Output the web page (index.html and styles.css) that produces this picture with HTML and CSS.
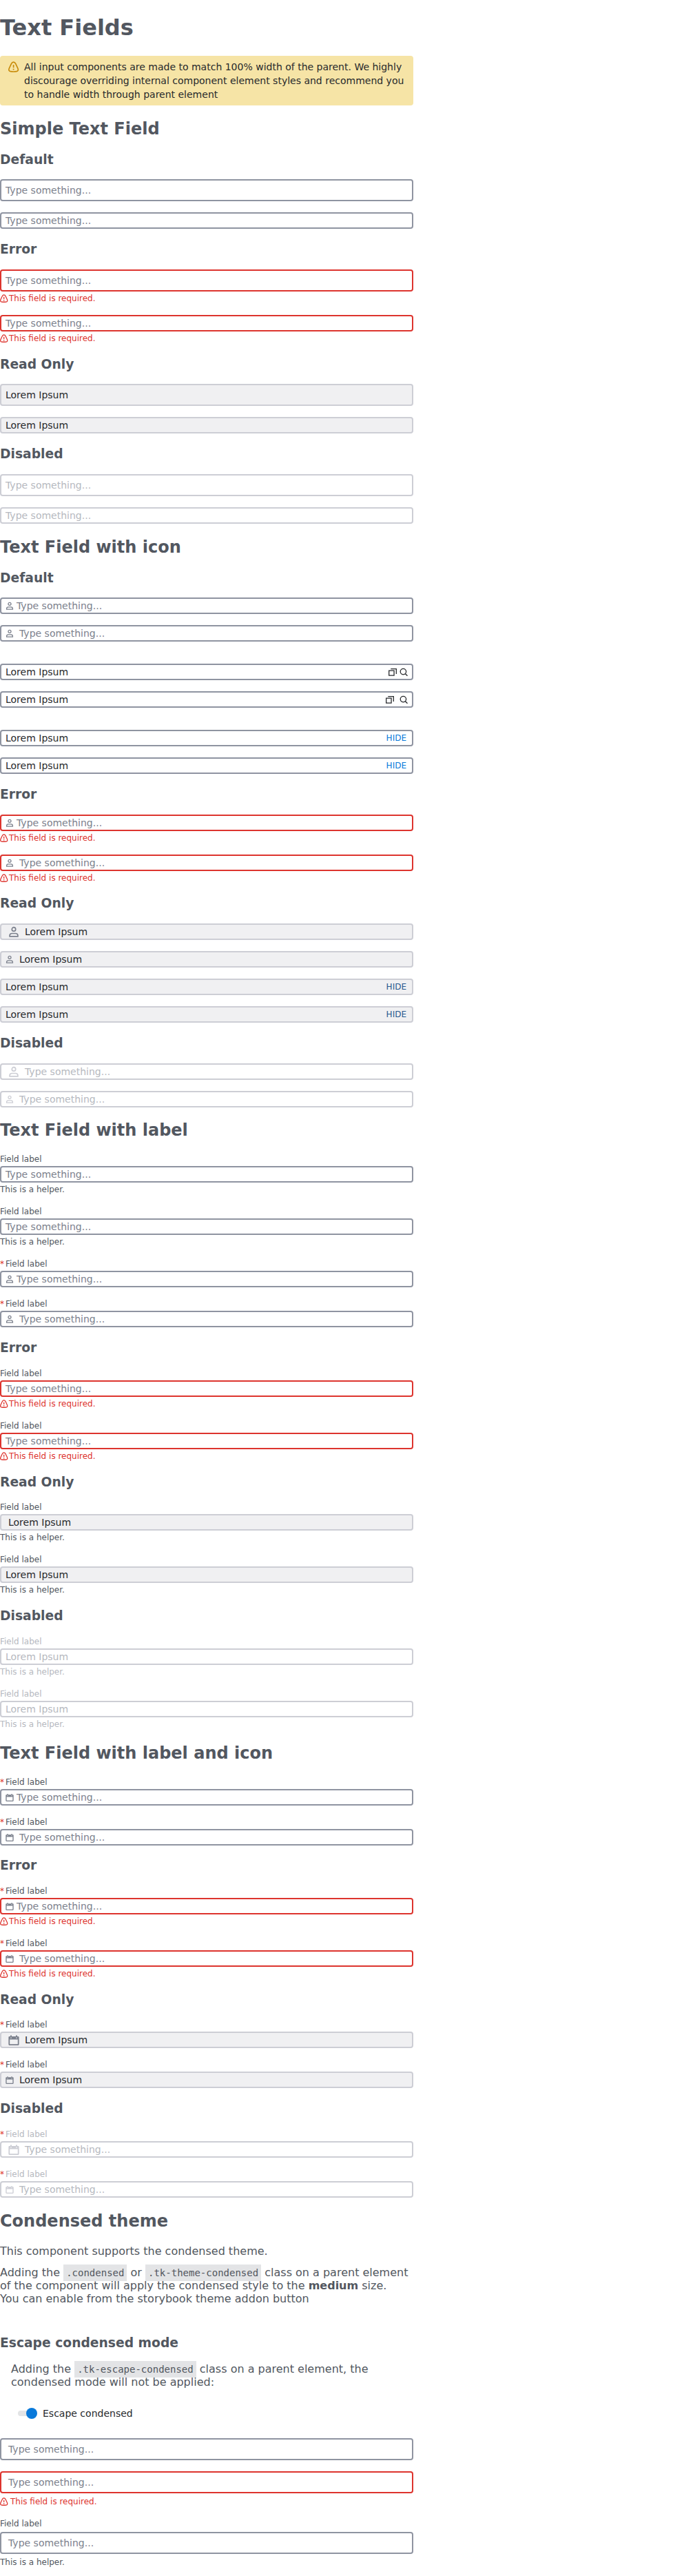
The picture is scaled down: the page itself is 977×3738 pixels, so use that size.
FILE: index.html
```html
<!DOCTYPE html>
<html lang="en">
<head>
<meta charset="utf-8">
<title>Text Fields</title>
<link rel="stylesheet" href="styles.css">
</head>
<body>
<svg class="sprite" aria-hidden="true">
  <symbol id="i-alert" viewBox="0 0 16 16"><path d="M7.600 1.200C6.200 1.200 5.200 2 4.400 3.700L1.400 10C.3 12.700 1 14.400 3.200 14.700C6 15.100 9.200 15.100 12 14.700C14.200 14.400 14.900 12.700 13.800 10L10.800 3.700C10 2 9 1.200 7.600 1.200Z" fill="none" stroke="currentColor" stroke-width="1.700"/><path d="M7.600 5v4.200M7.600 10.700v1.900" stroke="currentColor" stroke-width="1.700" fill="none"/></symbol>
  <symbol id="i-user" viewBox="0 0 16 16"><circle cx="8" cy="4.400" r="2.700" fill="none" stroke="currentColor" stroke-width="1.700"/><path d="M2.100 14.800v-1.200c0-2 1.500-3.100 3.400-3.100h5c1.900 0 3.400 1.100 3.400 3.100v1.200z" fill="none" stroke="currentColor" stroke-width="1.700"/></symbol>
  <symbol id="i-cal" viewBox="0 0 16 16"><path d="M.4 4.400C.4 3.500 1 3 1.900 3H3V1.500h2V3h6V1.500h2V3h1.100c.9 0 1.500.5 1.500 1.400v10c0 .9-.6 1.500-1.500 1.500H1.900c-.9 0-1.500-.6-1.500-1.500zM2.200 7.400v6.800h11.600V7.400zM3.300 4.400v1.400h1.400V4.400zM11.300 4.400v1.400h1.400V4.400z" fill="currentColor" fill-rule="evenodd"/></symbol>
  <symbol id="i-copy" viewBox="0 0 14 14"><path d="M.8 4.700h8.600v8.400H.8zM3.800 1.900h9.400V10.500" fill="none" stroke="currentColor" stroke-width="1.500"/></symbol>
  <symbol id="i-search" viewBox="0 0 14 14"><circle cx="6.300" cy="6.500" r="4.900" fill="none" stroke="currentColor" stroke-width="1.500"/><path d="M9.600 10l3.800 3.700" fill="none" stroke="currentColor" stroke-width="1.600"/></symbol>
</svg>
<main class="page" id="page"></main>
<script src="app.js"></script>
</body>
</html>
```

FILE: styles.css
```css
body { margin: 0; background: #fff; color: #525760; font-family: "DejaVu Sans", sans-serif; font-size: 16px; }
.sprite { display: none; }
.page { width: 600px; display: flow-root; }
.banner { display: flex; gap: 7px; box-sizing: border-box; height: 72px; padding: 6px 12px; border-radius: 4px; background: #f6e4a6; color: #27292c; font-size: 14px; line-height: 20px; }
.banner .icon { flex: none; width: 16px; height: 16px; margin-top: 2px; color: #c88b0a; }
.stack { display: flex; flex-direction: column; gap: 16px; }
.stack + .stack { margin-top: 32px; }
.label { display: flex; gap: 2px; height: 18px; font-size: 12px; line-height: 16px; }
.required { color: #dd342e; }
.box { display: flex; align-items: center; box-sizing: border-box; height: 24px; padding: 0 6px; border: 2px solid #8f94a1; border-radius: 4px; font-size: 14px; line-height: 20px; color: #7c818d; background: #fff; }
.tall .box { height: 32px; }
.value .box { color: #27292c; }
.box .icon { flex: none; width: 12px; height: 12px; margin-right: 4px; color: #7c818d; }
.spaced .box .icon { margin-right: 8px; }
.large .box .icon { width: 16px; height: 16px; margin: 0 8px 0 4px; }
.indent .box { padding-left: 10px; }
.box .tail { display: flex; gap: 4px; margin-left: auto; }
.box .tail .icon { margin: 0; color: #27292c; }
.spaced .box .tail { gap: 8px; }
.action { margin-right: 2px; font-size: 12px; color: #0979da; }
.helper { height: 18px; box-sizing: border-box; padding-top: 3px; font-size: 12px; line-height: 14px; }
.message { display: flex; gap: 1px; color: #dd342e; }
.message .icon { flex: none; width: 12px; height: 12px; margin-top: 1px; }
.error .box { border-color: #dd342e; }
.readonly .box { border-color: #cdced5; background: #f0f0f2; }
.readonly .action { color: #27588e; }
.disabled, .disabled .box { color: #b6b9c0; }
.disabled .box { border-color: #cdced5; }
.disabled .box .icon { color: #cdced5; }
.roomy .box { height: 32px; padding-left: 10px; }
.roomy .helper { height: 20px; padding-top: 5px; }
.roomy .label { height: 20px; }
.roomy .message { gap: 3px; }
.text { margin: 0 0 12px; }
.text.inset { margin-left: 16px; margin-bottom: 0; }
.text code { padding: 4px; background: #e3e4e6; font-family: "DejaVu Sans Mono", monospace; font-size: 14px; }
.escape { margin-top: 44px; }
.toggle { display: flex; align-items: center; gap: 8px; margin: 28px 0 28px 26px; font-size: 14px; color: #27292c; line-height: 16px; }
.track { display: flex; justify-content: flex-end; align-items: center; width: 28px; height: 8px; border-radius: 4px; background: #e3e4e6; }
.thumb { width: 16px; height: 16px; border-radius: 50%; background: #0979da; }
```

FILE: app.js
```js
const icon = (n) => `<svg class="icon"><use href="#i-${n}"/></svg>`;

function field(cls, o = {}) {
  const text = o.text || (/value/.test(cls) ? 'Lorem Ipsum' : 'Type something...');
  let html = `<div class="field ${cls}">`;
  if (o.label) html += `<div class="label">${o.required ? '<span class="required">*</span>' : ''}<span>Field label</span></div>`;
  html += `<div class="box">${o.icon ? icon(o.icon) : ''}<span>${text}</span>`;
  if (o.tail) html += `<span class="tail">${o.tail}</span>`;
  html += '</div>';
  if (/error/.test(cls)) html += `<div class="helper message">${icon('alert')}<span>This field is required.</span></div>`;
  if (o.helper) html += '<div class="helper">This is a helper.</div>';
  return html + '</div>';
}
const stack = (...f) => `<div class="stack">${f.join('')}</div>`;
const h2 = (t) => `<h2>${t}</h2>`;
const h3 = (t, c = '') => `<h3 class="${c}">${t}</h3>`;

const user = { icon: 'user' };
const tools = { tail: icon('copy') + icon('search') };
const hide = { tail: '<span class="action">HIDE</span>' };
const label = { label: true };
const helped = { label: true, helper: true };
const requiredUser = { label: true, required: true, icon: 'user' };
const cal = { label: true, required: true, icon: 'cal' };
const faded = { label: true, helper: true, text: 'Lorem Ipsum' };

document.getElementById('page').innerHTML = [
  '<h1>Text Fields</h1>',
  `<div class="banner">${icon('alert')}<span>All input components are made to match 100% width of the parent. We highly discourage overriding internal component element styles and recommend you to handle width through parent element</span></div>`,
  h2('Simple Text Field'),
  h3('Default'), stack(field('tall'), field('')),
  h3('Error'), stack(field('tall error'), field('error')),
  h3('Read Only'), stack(field('tall value readonly'), field('value readonly')),
  h3('Disabled'), stack(field('tall disabled'), field('disabled')),
  h2('Text Field with icon'),
  h3('Default'), stack(field('', user), field('spaced', user)),
  stack(field('value', tools), field('value spaced', tools)),
  stack(field('value', hide), field('value', hide)),
  h3('Error'), stack(field('error', user), field('error spaced', user)),
  h3('Read Only'), stack(field('value readonly large', user), field('value readonly spaced', user), field('value readonly', hide), field('value readonly', hide)),
  h3('Disabled'), stack(field('disabled large', user), field('disabled spaced', user)),
  h2('Text Field with label'),
  stack(field('', helped), field('', helped), field('', requiredUser), field('spaced', requiredUser)),
  h3('Error'), stack(field('error', label), field('error', label)),
  h3('Read Only'), stack(field('value readonly indent', helped), field('value readonly', helped)),
  h3('Disabled'), stack(field('disabled', faded), field('disabled', faded)),
  h2('Text Field with label and icon'),
  stack(field('', cal), field('spaced', cal)),
  h3('Error'), stack(field('error', cal), field('error spaced', cal)),
  h3('Read Only'), stack(field('value readonly large', cal), field('value readonly spaced', cal)),
  h3('Disabled'), stack(field('disabled large', cal), field('disabled spaced', cal)),
  h2('Condensed theme'),
  '<p class="text">This component supports the condensed theme.</p>',
  '<p class="text">Adding the <code>.condensed</code> or <code>.tk-theme-condensed</code> class on a parent element of the component will apply the condensed style to the <b>medium</b> size.<br>You can enable from the storybook theme addon button</p>',
  h3('Escape condensed mode', 'escape'),
  '<p class="text inset">Adding the <code>.tk-escape-condensed</code> class on a parent element, the condensed mode will not be applied:</p>',
  '<div class="toggle"><span class="track"><span class="thumb"></span></span><span>Escape condensed</span></div>',
  stack(field('roomy'), field('roomy error'), field('roomy', helped)),
].join('');
```
